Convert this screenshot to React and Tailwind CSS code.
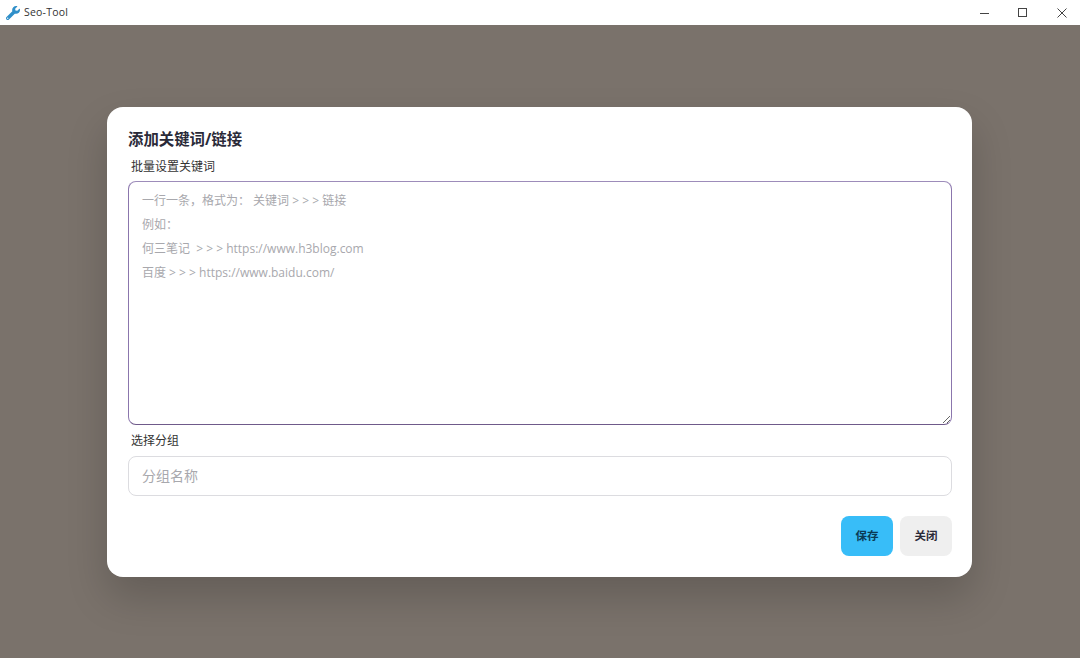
import React from "react";
import { FaWrench } from "react-icons/fa";

const font = "font-['Open_Sans','Noto_Sans_CJK_SC',sans-serif]";

const placeholder = `一行一条，格式为： 关键词 > > > 链接
例如：
何三笔记  > > > https://www.h3blog.com
百度 > > > https://www.baidu.com/`;

const TitleBar = () => (
  <div className="h-[25px] shrink-0 bg-white flex items-center justify-between">
    <div className="flex items-center pl-[6px]">
      <FaWrench className="w-[14px] h-[14px] text-[#2f8fc9]" />
      <span className="ml-[4px] text-[10.5px] text-[#333333] tracking-[0.2px]">Seo-Tool</span>
    </div>
    <div className="flex items-center text-[#444444]">
      <svg width="12" height="12" viewBox="0 0 12 12" className="mr-[26px]">
        <path d="M1 6.5h9" stroke="currentColor" strokeWidth="1" />
      </svg>
      <svg width="12" height="12" viewBox="0 0 12 12" className="mr-[27px]">
        <rect x="1.5" y="1.5" width="8" height="8" fill="none" stroke="currentColor" strokeWidth="1" />
      </svg>
      <svg width="12" height="12" viewBox="0 0 12 12" className="mr-[12px]">
        <path d="M1.5 1.5l9 9M10.5 1.5l-9 9" stroke="currentColor" strokeWidth="1" />
      </svg>
    </div>
  </div>
);

export default function App() {
  return (
    <div className={`h-screen flex flex-col overflow-hidden ${font}`}>
      <TitleBar />

      <div className="flex-1 bg-[#7a726b] flex items-center justify-center pr-[1px]">
        {/* 弹窗 */}
        <div className="w-[865px] h-[470px] bg-white rounded-[16px] pl-[21px] pr-[20px] pt-[21px] pb-[21px] shadow-[0_20px_40px_rgba(0,0,0,0.18)]">
          <h3 className="text-[15.4px] leading-[24px] font-bold text-[#2a2a38]">添加关键词/链接</h3>

          <label className="block mt-[5px] pl-[3px] text-[12px] leading-[20px] text-[#333333]">批量设置关键词</label>
          <textarea
            readOnly
            placeholder={placeholder}
            className="block mt-[4px] w-full h-[244px] rounded-[8px] border border-[#8b76ad] border-t-[#9d8cba] border-b-[#6f5a8a] px-[13px] py-[7px] text-[12px] leading-[24px] bg-white outline-none placeholder:text-[#a8a8ad]"
          />

          <label className="block mt-[6px] pl-[3px] text-[12px] leading-[20px] text-[#333333]">选择分组</label>
          <input
            readOnly
            placeholder="分组名称"
            className="block mt-[5px] w-full h-[40px] rounded-[8px] border border-[#dcdce0] px-[13px] text-[14px] bg-white outline-none placeholder:text-[#a8a8ad]"
          />

          <div className="mt-[20px] flex justify-end gap-[7px]">
            <button className="w-[52px] h-[40px] rounded-[8px] bg-[#38bdf8] text-[11.5px] font-bold text-[#0b3a55]">保存</button>
            <button className="w-[52px] h-[40px] rounded-[8px] bg-[#efefef] text-[11.5px] font-bold text-[#2a2a38]">关闭</button>
          </div>
        </div>
      </div>
    </div>
  );
}
